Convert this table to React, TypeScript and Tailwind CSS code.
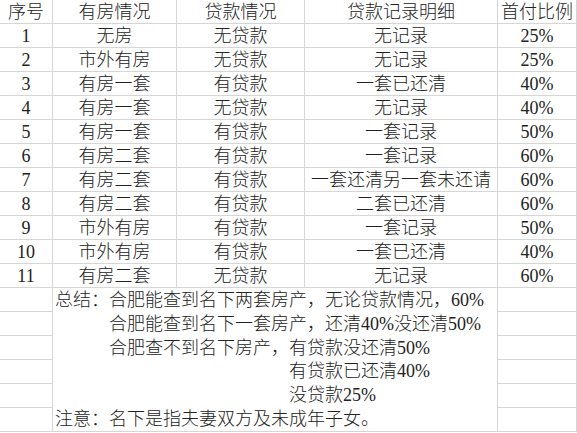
const rows = [
  ["1", "无房", "无贷款", "无记录", "25%"],
  ["2", "市外有房", "无贷款", "无记录", "25%"],
  ["3", "有房一套", "有贷款", "一套已还清", "40%"],
  ["4", "有房一套", "无贷款", "无记录", "40%"],
  ["5", "有房一套", "有贷款", "一套记录", "50%"],
  ["6", "有房二套", "有贷款", "一套记录", "60%"],
  ["7", "有房二套", "有贷款", "一套还清另一套未还请", "60%"],
  ["8", "有房二套", "有贷款", "二套已还清", "60%"],
  ["9", "市外有房", "有贷款", "一套记录", "50%"],
  ["10", "市外有房", "有贷款", "一套已还清", "40%"],
  ["11", "有房二套", "无贷款", "无记录", "60%"],
];

const header = ["序号", "有房情况", "贷款情况", "贷款记录明细", "首付比例"];

const cell = "h-[24px] flex items-center justify-center border-r border-b border-[#d6d6d6] whitespace-nowrap";

export default function App() {
  return (
    <div
      className="w-[577px] h-[433px] overflow-hidden bg-white text-[#222] text-[18px] leading-none font-light"
      style={{ fontFamily: '"Liberation Serif", "Noto Sans CJK SC", serif' }}
    >
      <div className="grid grid-cols-[53px_124px_128px_193px_79px] grid-rows-[repeat(18,24px)]">
        {header.map((h) => (
          <div key={h} className={cell}>
            {h}
          </div>
        ))}
        {rows.map((r) =>
          r.map((v, i) => (
            <div key={r[0] + i} className={cell}>
              {v}
            </div>
          ))
        )}

        {/* summary block: col 1 and col 5 keep their cells, the middle is merged */}
        <div className={cell + " col-start-1 row-start-13"} />
        <div className={cell + " col-start-1 row-start-14"} />
        <div className={cell + " col-start-1 row-start-15"} />
        <div className={cell + " col-start-1 row-start-16"} />
        <div className={cell + " col-start-1 row-start-17"} />
        <div className={cell + " col-start-1 row-start-18"} />

        <div className="col-start-2 col-span-3 row-start-13 row-span-6 border-r border-b border-[#d6d6d6] flex flex-col whitespace-nowrap">
          <div className="h-[24px] flex items-center pl-[2px]">总结：合肥能查到名下两套房产，无论贷款情况，60%</div>
          <div className="h-[24px] flex items-center pl-[56px]">合肥能查到名下一套房产，还清40%没还清50%</div>
          <div className="h-[24px] flex items-center pl-[56px]">合肥查不到名下房产，有贷款没还清50%</div>
          <div className="h-[24px] flex items-center pl-[236px]">有贷款已还清40%</div>
          <div className="h-[24px] flex items-center pl-[236px]">没贷款25%</div>
          <div className="h-[24px] flex items-center pl-[2px]">注意：名下是指夫妻双方及未成年子女。</div>
        </div>

        <div className={cell + " col-start-5 row-start-13"} />
        <div className={cell + " col-start-5 row-start-14"} />
        <div className={cell + " col-start-5 row-start-15"} />
        <div className={cell + " col-start-5 row-start-16"} />
        <div className={cell + " col-start-5 row-start-17"} />
        <div className={cell + " col-start-5 row-start-18"} />
      </div>
    </div>
  );
}
